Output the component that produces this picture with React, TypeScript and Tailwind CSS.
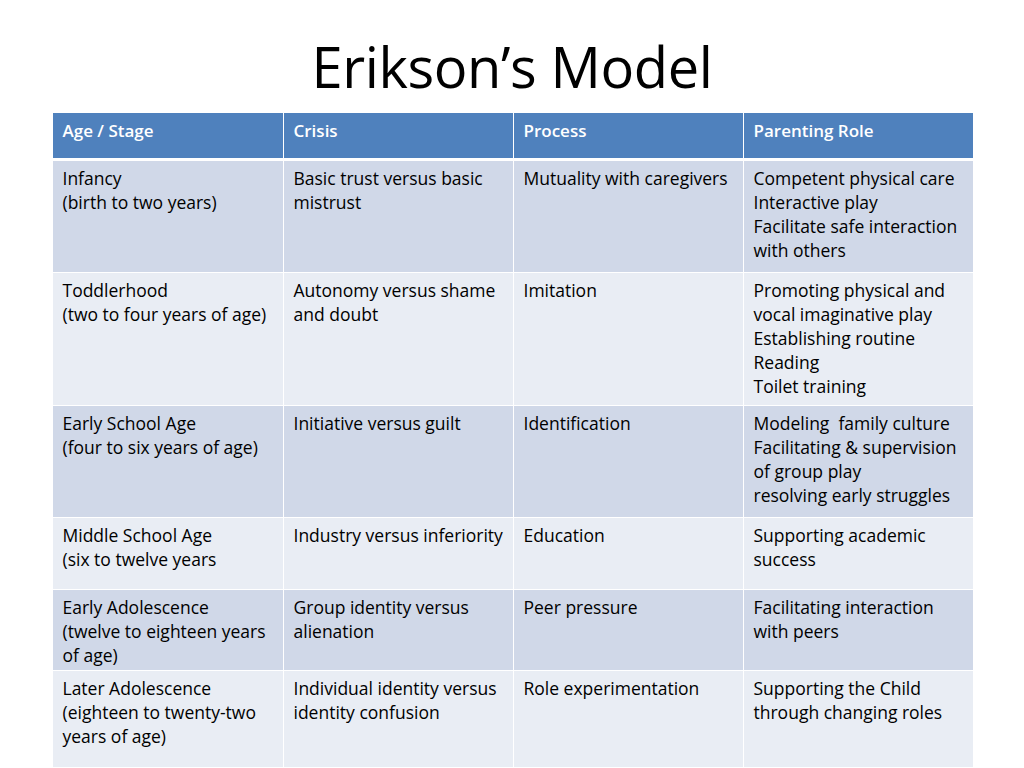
import React from "react"

const rows: { h: string; bg: string; cells: string[][] }[] = [
  {
    h: "h-[112px]",
    bg: "bg-[#d0d8e8]",
    cells: [
      ["Infancy", "(birth to two years)"],
      ["Basic trust versus basic", "mistrust"],
      ["Mutuality with caregivers"],
      ["Competent physical care", "Interactive play", "Facilitate safe interaction", "with others"],
    ],
  },
  {
    h: "h-[133px]",
    bg: "bg-[#e9edf4]",
    cells: [
      ["Toddlerhood", "(two to four years of age)"],
      ["Autonomy versus shame", "and doubt"],
      ["Imitation"],
      ["Promoting physical and", "vocal imaginative play", "Establishing routine", "Reading", "Toilet training"],
    ],
  },
  {
    h: "h-[112px]",
    bg: "bg-[#d0d8e8]",
    cells: [
      ["Early School Age", "(four to six years of age)"],
      ["Initiative versus guilt"],
      ["Identification"],
      ["Modeling  family culture", "Facilitating & supervision", "of group play", "resolving early struggles"],
    ],
  },
  {
    h: "h-[72px]",
    bg: "bg-[#e9edf4]",
    cells: [
      ["Middle School Age", "(six to twelve years"],
      ["Industry versus inferiority"],
      ["Education"],
      ["Supporting academic", "success"],
    ],
  },
  {
    h: "h-[81px]",
    bg: "bg-[#d0d8e8]",
    cells: [
      ["Early Adolescence", "(twelve to eighteen years", "of age)"],
      ["Group identity versus", "alienation"],
      ["Peer pressure"],
      ["Facilitating interaction", "with peers"],
    ],
  },
  {
    h: "h-[97px]",
    bg: "bg-[#e9edf4]",
    cells: [
      ["Later Adolescence", "(eighteen to twenty-two", "years of age)"],
      ["Individual identity versus", "identity confusion"],
      ["Role experimentation"],
      ["Supporting the Child", "through changing roles"],
    ],
  },
]

const headers = ["Age / Stage", "Crisis", "Process", "Parenting Role"]

export default function App() {
  return (
    <div
      className="w-[1024px] h-[768px] bg-white overflow-hidden flex flex-col items-center"
      style={{ fontFamily: '"Open Sans", "Liberation Sans", sans-serif' }}
    >
      <h1 className="mt-[28px] h-[85px] text-[56px] leading-[76px] text-black tracking-[-0.4px]">
        Erikson’s Model
      </h1>
      <div className="w-[920px] ml-[1px] flex flex-col">
        <div className="flex h-[45px] bg-[#4f81bd] border-b-[3px] border-white box-content">
          {headers.map((t, i) => (
            <div
              key={t}
              className={`w-[230px] px-[10px] pt-[5px] text-[17px] font-semibold text-white ${i > 0 ? "border-l border-white" : ""}`}
            >
              {t}
            </div>
          ))}
        </div>
        {rows.map((r, ri) => (
          <div key={ri} className={`flex ${r.h} ${r.bg} border-b border-white`}>
            {r.cells.map((lines, ci) => (
              <div
                key={ci}
                className={`w-[230px] px-[10px] pt-[5px] text-[17.5px] leading-[24px] text-black ${ci > 0 ? "border-l border-white" : ""}`}
              >
                {lines.map((l, li) => (
                  <div key={li} className="whitespace-pre">{l}</div>
                ))}
              </div>
            ))}
          </div>
        ))}
      </div>
    </div>
  )
}
